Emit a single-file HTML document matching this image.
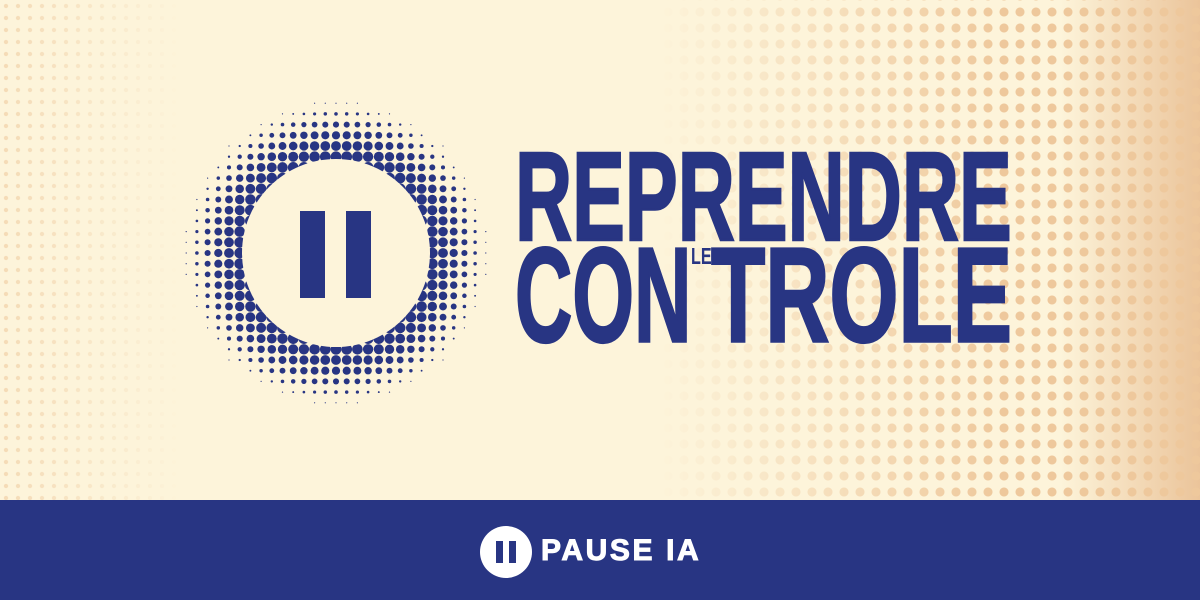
<!DOCTYPE html>
<html><head><meta charset="utf-8"><style>
*{margin:0;padding:0}
body{width:1200px;height:600px;overflow:hidden;position:relative;background:#FDF4DA;font-family:"Liberation Sans",sans-serif}
#bg{position:absolute;left:0;top:0;width:1200px;height:500px;background:linear-gradient(90deg,rgba(235,196,154,0) 0,rgba(235,196,154,0) 1060px,#EBC49A 1200px)}
#dots{position:absolute;left:0;top:0;width:1200px;height:500px;
background-image:radial-gradient(circle,#EEC89C 4.2px,transparent 4.8px);background-size:16px 16px;background-position:4px 4px;
-webkit-mask-image:linear-gradient(90deg,transparent 660px,rgba(0,0,0,.45) 820px,#000 1000px);mask-image:linear-gradient(90deg,transparent 660px,rgba(0,0,0,.45) 820px,#000 1000px)}
#dots2{position:absolute;left:0;top:0;width:220px;height:500px;
background-image:radial-gradient(circle,#F0CFA6 1.8px,transparent 2.4px);background-size:12px 12px;
-webkit-mask-image:linear-gradient(90deg,rgba(0,0,0,.7) 0,transparent 180px);mask-image:linear-gradient(90deg,rgba(0,0,0,.7) 0,transparent 180px)}
.t{position:absolute;color:#283583;font-weight:bold;font-size:126px;line-height:1;transform-origin:0 0;white-space:nowrap;-webkit-text-stroke:2.5px #283583}
#bar{position:absolute;left:0;top:500px;width:1200px;height:100px;background:#283583}
</style></head><body>
<div id="bg"></div><div id="dots"></div><div id="dots2"></div>
<svg id="ht" width="1200" height="500" style="position:absolute;left:0;top:0"></svg>
<div class="t" style="left:515px;top:134px;transform:scale(0.628,1.0)">REPRENDRE</div>
<div class="t" style="left:515px;top:228px;transform:scale(0.63,1.07)">CON</div>
<div class="t" style="left:711px;top:228px;transform:scale(0.705,1.07)">TROLE</div>
<div style="position:absolute;left:691px;top:245px;color:#283583;font-weight:bold;font-size:23px;line-height:1;transform:scaleX(0.7);transform-origin:0 0">LE</div>
<div id="bar">
<svg width="54" height="54" style="position:absolute;left:479px;top:25px"><circle cx="27" cy="27" r="26" fill="#fff"/><rect x="17" y="16" width="7" height="22" fill="#283583"/><rect x="30" y="16" width="7" height="22" fill="#283583"/></svg>
<div style="position:absolute;left:541px;top:36px;color:#fff;font-weight:bold;font-size:30px;line-height:1;letter-spacing:2.6px;-webkit-text-stroke:1px #fff">PAUSE IA</div>
</div>
<script>
var s=document.getElementById('ht'),h='',cx=336,cy=253,sp=10.7;
for(var i=-15;i<=15;i++)for(var j=-15;j<=15;j++){var x=cx+i*sp,y=cy+j*sp,d=Math.hypot(x-cx,y-cy);
if(d<90||d>152)continue;var f=(d-94)/58;if(f<0)f=0;var r=5.4*(1-Math.pow(f,1.6));if(r<0.6)r=0.6;
h+='<circle cx="'+x.toFixed(1)+'" cy="'+y.toFixed(1)+'" r="'+r.toFixed(2)+'" fill="#283583"/>';}
h+='<circle cx="336" cy="253" r="94" fill="#FDF4DA"/><rect x="300" y="211" width="25" height="87" fill="#283583"/><rect x="346" y="211" width="25" height="87" fill="#283583"/>';
s.innerHTML=h;
</script>
</body></html>
